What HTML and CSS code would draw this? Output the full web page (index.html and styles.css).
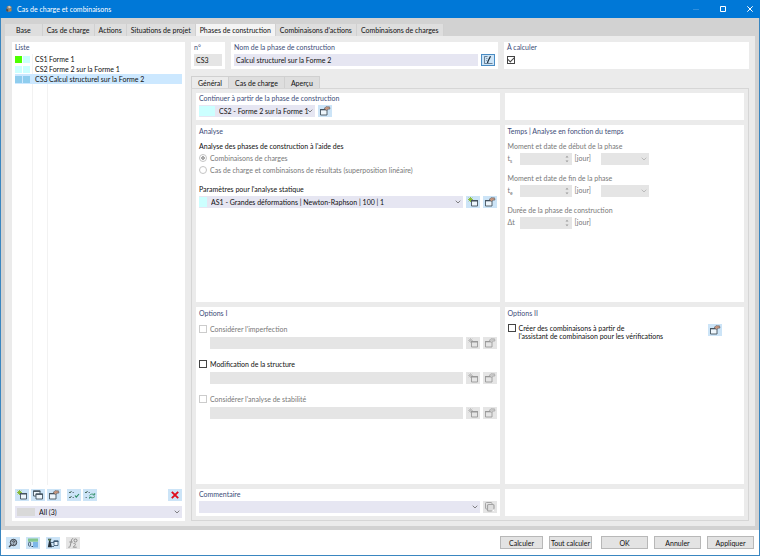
FILE: index.html
```
<!DOCTYPE html>
<html lang="fr">
<head>
  <meta charset="UTF-8" />
  <meta name="viewport" content="width=device-width, initial-scale=1.0" />
  <title>Cas de charge et combinaisons</title>
  <link rel="stylesheet" href="styles.css">
</head>
<body>

  <!-- Icon sprite -->
  <svg class="sprite" aria-hidden="true">
    <symbol id="i-chevron" viewBox="0 0 6 4"><path d="M.7.7 3 3 5.300.7" fill="none" stroke="currentColor" stroke-width=".8"/></symbol>
    <symbol id="i-spin" viewBox="0 0 4 8"><path d="M.5 2.500 2 .8 3.500 2.500zM.5 5.500 2 7.200 3.500 5.500z" fill="currentColor"/></symbol>
    <symbol id="i-new" viewBox="0 0 14 12">
      <path class="star" d="M4.500 1v5M2 3.500h5M2.700 1.700l3.600 3.600M6.300 1.700 2.700 5.300" fill="none" stroke-width=".9"/>
      <path class="box" d="M5.500 4.500h6v5.500H5.500z" stroke-width=".9"/>
      <path class="bar" d="M5.100 4h6.800v1.500H5.100z"/>
    </symbol>
    <symbol id="i-edit" viewBox="0 0 14 12">
      <path class="box" d="M2.500 4.500h6.500v5.500H2.500z" stroke-width=".9"/>
      <path class="bar" d="M2.100 4h6v1.300h-6z"/>
      <path class="hand" d="M6 3.500 8.500 1.500l1.200.3L11.500 1.800 12 4 10 4.300 8.500 5.500 7.600 4.800z" stroke-width=".5"/>
    </symbol>
    <symbol id="i-copy" viewBox="0 0 14 12">
      <path class="box" d="M2.500 2h6.500v5H2.500z" stroke-width=".9"/><path class="bar" d="M2.100 1.500h7.300v1.400H2.100z"/>
      <path class="box" d="M5 5h6.500v5H5z" stroke-width=".9"/><path class="bar" d="M4.600 4.500h7.300v1.400H4.600z"/>
    </symbol>
    <symbol id="i-checks" viewBox="0 0 14 12" fill="none">
      <path d="M2 3l1 1 1.500-2M2 8l1 1 1.500-2" stroke="#3b5948" stroke-width=".9"/>
      <path d="M5.500 3.500h1.500M5.500 8.500h1.500" stroke="#5a6a78" stroke-width=".8"/>
      <path d="M8 6.500 9.300 8.200 12 5" stroke="#2a8a60" stroke-width="1.100"/>
    </symbol>
    <symbol id="i-swap" viewBox="0 0 14 12" fill="none">
      <path d="M2 3l1 1 1.500-2" stroke="#3b5948" stroke-width=".9"/>
      <path d="M5.500 3.500h1.500M2.500 8.500h1.500" stroke="#5a6a78" stroke-width=".8"/>
      <path d="M6.500 6.500C7.500 4.700 10 4.700 11.500 5.700M11.700 4v2h-2M12 7.500c-1.500 1.700-4 1.500-5 .8M6.500 9.700V8h2" stroke="#2a8a60" stroke-width=".8"/>
    </symbol>
    <symbol id="i-delete" viewBox="0 0 14 12"><path d="M3.800 2.800 10.200 9.200M10.200 2.800 3.800 9.200" stroke="#e00c1c" stroke-width="1.900" fill="none"/></symbol>
    <symbol id="i-rename" viewBox="0 0 14 12" fill="none">
      <path d="M6.500 2.500h-3v7h8" stroke="#3d5870" stroke-width=".7"/>
      <path d="M5 4.500h1.500M5 6.500h1" stroke="#6b8296" stroke-width=".7"/>
      <path d="M9.500 2.200 7 7.300 6.500 9" stroke="#1d2d3d" stroke-width="1.200"/>
    </symbol>
    <symbol id="i-stack" viewBox="0 0 14 12">
      <rect x="2.500" y="1.500" width="6.500" height="6.500" rx="1" fill="none" stroke="#a4a4a4" stroke-width="1"/>
      <rect x="4.500" y="3.500" width="6.500" height="6.500" rx="1" fill="#dedede" stroke="#a4a4a4" stroke-width="1.200"/>
      <path d="M11.500 7.500v3h-3z" fill="#fff"/>
    </symbol>
    <symbol id="i-help" viewBox="0 0 14 12">
      <path d="M5.500 7.500 3 10" stroke="#3a3f46" stroke-width="1.300"/>
      <circle cx="7.500" cy="5.500" r="3.200" fill="#a6b6c5" stroke="#3a3f46" stroke-width="1"/>
      <path d="M6.500 4.800c0-1.400 2.200-1.200 2 0-.1.600-1 .6-1 1.400M7.500 6.900v.8" fill="none" stroke="#222" stroke-width=".8"/>
    </symbol>
    <symbol id="i-units" viewBox="0 0 14 12">
      <path d="M2 1.500h10v3.200H2z" fill="#83c78f"/><path d="M7 5h5v5.500H7z" fill="#7db7e8"/>
      <rect x="2.600" y="5.200" width="2" height="4" rx="1" fill="none" stroke="#28425a" stroke-width=".8"/>
      <path d="M5.500 9.500h1.500" stroke="#28425a" stroke-width="1"/>
    </symbol>
    <symbol id="i-tree" viewBox="0 0 14 12">
      <path d="M1.800 1.800h3.700L4.500 4l1.500 6.300H1.800L3 4z" fill="#26323c"/>
      <path d="M2.500 2.300h2v1.200h-2z" fill="#73a85f"/>
      <path d="M5 5.500h3M5 9.500h3" stroke="#34506a" stroke-width=".8"/>
      <path d="M8 4h4v4.500H8z" fill="#eaf5ff" stroke="#34506a" stroke-width=".8"/><path d="M7.600 3.600h4.800v1.300H7.600z" fill="#34506a"/>
    </symbol>
    <symbol id="i-fx" viewBox="0 0 14 12" fill="none" stroke="#8a8a8a">
      <path d="M7.300 1.800C6 1.200 5.600 2.500 5.300 4L4.200 9c-.3 1.400-1.200 1.500-1.900 1.200M3.300 5h3.500" stroke-width=".9"/>
      <path d="M7.500 6.500c1.500-.7 2.500.5 1.500 1.700L7.200 10.200h3.500" stroke-width=".9"/>
      <circle cx="9.500" cy="3.500" r="1.500" stroke-width="1"/>
    </symbol>
  </svg>

  <div class="window">
    <header class="titlebar">
      <svg class="app-icon" viewBox="0 0 10 10">
        <path d="M2.500 1.500 6 .5 8.500 2.500 8 6 5 9 1.500 7.500z" fill="#8d8174"/>
        <path d="M3.500 2 6 1.300 7.500 3 5 4.500z" fill="#d8cdb8"/>
        <path d="M1.500 4.500 4 5.500v3L1.500 7.500z" fill="#4f4a49"/>
        <path d="M5.500 5.500h2.500v2.500H5.500z" fill="#d9882f"/>
      </svg>
      <h1>Cas de charge et combinaisons</h1>
      <div class="caption-buttons">
        <button class="caption-btn dim" aria-label="Réduire"><svg viewBox="0 0 8 8"><path d="M1 4.500h6"/></svg></button>
        <button class="caption-btn" aria-label="Agrandir"><svg viewBox="0 0 8 8"><path d="M1.500 1.500h5v5h-5z"/></svg></button>
        <button class="caption-btn" aria-label="Fermer"><svg viewBox="0 0 8 8"><path d="M1.300 1.300l5.400 5.400M6.700 1.300 1.300 6.700"/></svg></button>
      </div>
    </header>

    <main class="workspace">
      <nav class="tabs main-tabs">
        <button class="tab">Base</button>
        <button class="tab">Cas de charge</button>
        <button class="tab">Actions</button>
        <button class="tab">Situations de projet</button>
        <button class="tab active">Phases de construction</button>
        <button class="tab">Combinaisons d'actions</button>
        <button class="tab">Combinaisons de charges</button>
      </nav>

      <div class="page">
        <!-- Left list -->
        <aside class="panel list-panel">
          <h2>Liste</h2>
          <ul class="phase-list">
            <li><span class="swatches"><i class="green"></i><i class="cyan"></i></span><span class="code">CS1</span><span>Forme 1</span></li>
            <li><span class="swatches"><i class="cyan"></i><i class="cyan"></i></span><span class="code">CS2</span><span>Forme 2 sur la Forme 1</span></li>
            <li class="selected"><span class="swatches"><i class="blue"></i><i class="blue"></i></span><span class="code">CS3</span><span>Calcul structurel sur la Forme 2</span></li>
            <li class="rest"><span class="swatches"></span><span class="code"></span><span></span></li>
          </ul>
          <div class="list-tools">
            <button class="icon-btn" aria-label="Nouveau"><svg><use href="#i-new"/></svg></button>
            <button class="icon-btn" aria-label="Copier"><svg><use href="#i-copy"/></svg></button>
            <button class="icon-btn" aria-label="Modifier"><svg><use href="#i-edit"/></svg></button>
            <button class="icon-btn group" aria-label="Tout sélectionner"><svg><use href="#i-checks"/></svg></button>
            <button class="icon-btn" aria-label="Inverser la sélection"><svg><use href="#i-swap"/></svg></button>
            <button class="icon-btn last" aria-label="Supprimer"><svg><use href="#i-delete"/></svg></button>
          </div>
          <div class="combo filter">
            <span class="chip grey"></span>
            <select aria-label="Filtre"><option>All (3)</option></select>
            <svg class="chevron"><use href="#i-chevron"/></svg>
          </div>
        </aside>

        <section class="detail">
          <div class="head">
            <div class="panel number-panel">
              <h2><label for="num">n°</label></h2>
              <input class="field readonly" id="num" type="text" value="CS3" readonly>
            </div>
            <div class="panel name-panel">
              <h2><label for="name">Nom de la phase de construction</label></h2>
              <div class="row">
                <input class="field" id="name" type="text" value="Calcul structurel sur la Forme 2">
                <button class="icon-btn framed" aria-label="Renommer"><svg><use href="#i-rename"/></svg></button>
              </div>
            </div>
            <div class="panel calc-panel">
              <h2><label for="calc">À calculer</label></h2>
              <input class="check" id="calc" type="checkbox" checked>
            </div>
          </div>

          <nav class="tabs sub-tabs">
            <button class="tab active">Général</button>
            <button class="tab">Cas de charge</button>
            <button class="tab">Aperçu</button>
          </nav>

          <div class="tab-page">
            <section class="panel">
              <h2><label for="from">Continuer à partir de la phase de construction</label></h2>
              <div class="row">
                <div class="combo from">
                  <span class="chip wide"></span>
                  <select id="from"><option>CS2 - Forme 2 sur la Forme 1</option></select>
                  <svg class="chevron"><use href="#i-chevron"/></svg>
                </div>
                <button class="icon-btn" aria-label="Modifier la phase"><svg><use href="#i-edit"/></svg></button>
              </div>
            </section>
            <section class="panel"></section>

            <section class="panel tall">
              <h2>Analyse</h2>
              <div class="block">
                <p>Analyse des phases de construction à l'aide des</p>
                <label class="option disabled"><input class="radio" type="radio" name="mode" checked disabled>Combinaisons de charges</label>
                <label class="option disabled"><input class="radio" type="radio" name="mode" disabled>Cas de charge et combinaisons de résultats (superposition linéaire)</label>
              </div>
              <div class="block">
                <p><label for="static">Paramètres pour l'analyse statique</label></p>
                <div class="row">
                  <div class="combo">
                    <span class="chip"></span>
                    <select id="static"><option>AS1 - Grandes déformations | Newton-Raphson | 100 | 1</option></select>
                    <svg class="chevron"><use href="#i-chevron"/></svg>
                  </div>
                  <button class="icon-btn" aria-label="Nouveau"><svg><use href="#i-new"/></svg></button>
                  <button class="icon-btn" aria-label="Modifier"><svg><use href="#i-edit"/></svg></button>
                </div>
              </div>
            </section>

            <section class="panel tall">
              <h2>Temps | Analyse en fonction du temps</h2>
              <div class="block disabled">
                <p>Moment et date de début de la phase</p>
                <div class="row">
                  <label class="sym" for="ts">t<sub>s</sub></label>
                  <div class="spin"><input class="field" id="ts" type="text" disabled><svg><use href="#i-spin"/></svg></div>
                  <span class="unit">[jour]</span>
                  <div class="combo off"><select aria-label="Date de début" disabled></select><svg class="chevron"><use href="#i-chevron"/></svg></div>
                </div>
              </div>
              <div class="block disabled">
                <p>Moment et date de fin de la phase</p>
                <div class="row">
                  <label class="sym" for="te">t<sub>e</sub></label>
                  <div class="spin"><input class="field" id="te" type="text" disabled><svg><use href="#i-spin"/></svg></div>
                  <span class="unit">[jour]</span>
                  <div class="combo off"><select aria-label="Date de fin" disabled></select><svg class="chevron"><use href="#i-chevron"/></svg></div>
                </div>
              </div>
              <div class="block disabled">
                <p>Durée de la phase de construction</p>
                <div class="row">
                  <label class="sym" for="dt">Δt</label>
                  <div class="spin"><input class="field" id="dt" type="text" disabled><svg><use href="#i-spin"/></svg></div>
                  <span class="unit">[jour]</span>
                </div>
              </div>
            </section>

            <section class="panel tall">
              <h2>Options I</h2>
              <div class="choice">
                <label class="option disabled"><input class="check" type="checkbox" disabled>Considérer l'imperfection</label>
                <div class="row">
                  <input class="field" type="text" aria-label="Imperfection" disabled>
                  <button class="icon-btn" aria-label="Nouveau" disabled><svg><use href="#i-new"/></svg></button>
                  <button class="icon-btn" aria-label="Modifier" disabled><svg><use href="#i-edit"/></svg></button>
                </div>
              </div>
              <div class="choice">
                <label class="option"><input class="check" type="checkbox">Modification de la structure</label>
                <div class="row">
                  <input class="field" type="text" aria-label="Structure" disabled>
                  <button class="icon-btn" aria-label="Nouveau" disabled><svg><use href="#i-new"/></svg></button>
                  <button class="icon-btn" aria-label="Modifier" disabled><svg><use href="#i-edit"/></svg></button>
                </div>
              </div>
              <div class="choice">
                <label class="option disabled"><input class="check" type="checkbox" disabled>Considérer l'analyse de stabilité</label>
                <div class="row">
                  <input class="field" type="text" aria-label="Stabilité" disabled>
                  <button class="icon-btn" aria-label="Nouveau" disabled><svg><use href="#i-new"/></svg></button>
                  <button class="icon-btn" aria-label="Modifier" disabled><svg><use href="#i-edit"/></svg></button>
                </div>
              </div>
            </section>

            <section class="panel tall">
              <h2>Options II</h2>
              <div class="choice wizard">
                <label class="option two-lines"><input class="check" type="checkbox"><span>Créer des combinaisons à partir de<br>l'assistant de combinaison pour les vérifications</span></label>
                <button class="icon-btn" aria-label="Modifier l'assistant"><svg><use href="#i-edit"/></svg></button>
              </div>
            </section>

            <section class="panel">
              <h2><label for="comment">Commentaire</label></h2>
              <div class="row">
                <div class="combo">
                  <select id="comment"><option></option></select>
                  <svg class="chevron"><use href="#i-chevron"/></svg>
                </div>
                <button class="icon-btn" aria-label="Bibliothèque" disabled><svg><use href="#i-stack"/></svg></button>
              </div>
            </section>
            <section class="panel"></section>
          </div>
        </section>
      </div>
    </main>

    <footer class="footer">
      <div class="footer-tools">
        <button class="icon-btn" aria-label="Aide"><svg><use href="#i-help"/></svg></button>
        <button class="icon-btn" aria-label="Unités"><svg><use href="#i-units"/></svg></button>
        <button class="icon-btn" aria-label="Navigateur"><svg><use href="#i-tree"/></svg></button>
        <button class="icon-btn" aria-label="Formule" disabled><svg><use href="#i-fx"/></svg></button>
      </div>
      <div class="actions">
        <button class="btn">Calculer</button>
        <button class="btn">Tout calculer</button>
      </div>
      <div class="actions wide">
        <button class="btn">OK</button>
        <button class="btn">Annuler</button>
        <button class="btn">Appliquer</button>
      </div>
    </footer>
  </div>

</body>
</html>
```

FILE: styles.css
```
* {
  box-sizing: border-box;
}
body {
  margin: 0;
  font-family: Lato, "Open Sans", sans-serif;
  font-size: 7px;
  line-height: 10px;
  color: #101010;
}
button, input, select {
  font: inherit;
  color: inherit;
  margin: 0;
  padding: 0;
  border: none;
  border-radius: 0;
}
h1, h2, p, ul {
  margin: 0;
  padding: 0;
  font-size: inherit;
  font-weight: 400;
}
.sprite {
  position: absolute;
  width: 0;
  height: 0;
}
.window {
  display: flex;
  flex-direction: column;
  min-height: 100vh;
  border: 1px solid #3a86c0;
  border-top: none;
}

/* Title bar */
.titlebar {
  display: flex;
  align-items: center;
  height: 18px;
  margin: 0 -1px;
  padding: 0 6px 0 5px;
  background: #0078d7;
  color: #fff;
}
.app-icon {
  width: 8px;
  height: 8px;
  margin-right: 4px;
}
.caption-buttons {
  display: flex;
  margin-left: auto;
}
.caption-btn {
  width: 27px;
  height: 18px;
  background: none;
}
.caption-btn svg {
  display: block;
  width: 8px;
  height: 8px;
  margin-left: auto;
  fill: none;
  stroke: #fff;
}
.caption-btn.dim svg {
  stroke: #2f8fde;
}

/* Main area */
.workspace {
  flex: 1;
  display: flex;
  flex-direction: column;
  padding: 6px 4px 4px;
  background: #d2d2d2;
}
.tabs {
  display: flex;
}
.tab {
  height: 12px;
  background: #dedede;
  border-right: 1px solid #d0d0d0;
  white-space: nowrap;
}
.tab.active {
  background: #f4f4f4;
}
.main-tabs .tab {
  padding: 0 4px;
}
.main-tabs .tab:first-child {
  padding: 0 11px;
}
.page {
  flex: 1;
  display: flex;
  gap: 6px;
  padding: 6px 6px 5px 7px;
  background: #ebebeb;
}
.panel {
  padding: 0 3px 3px;
  background: #fff;
}
.panel.tall {
  padding-top: 1px;
}
.panel h2 {
  height: 12px;
  line-height: 11px;
  color: #3c4c78;
}

/* Phase list */
.list-panel {
  display: flex;
  flex-direction: column;
  flex: 0 0 173px;
}
.phase-list {
  flex: 1;
  display: flex;
  flex-direction: column;
  list-style: none;
}
.phase-list li {
  display: flex;
  height: 10px;
}
.phase-list li.rest {
  flex: 1;
}
.phase-list .selected {
  background: #cce8ff;
}
.swatches {
  display: flex;
  align-items: center;
  gap: 1px;
  width: 18px;
  border-right: 1px solid #f2f2f2;
}
.swatches i {
  width: 7px;
  height: 7px;
}
.green {
  background: #4cff00;
}
.cyan {
  background: #ccffff;
}
.blue {
  background: #8fcdee;
}
.code {
  width: 15px;
  padding-left: 2px;
  margin-right: 1px;
  border-right: 1px solid #f2f2f2;
}
.phase-list .selected span {
  border-color: transparent;
}
.list-tools {
  display: flex;
  gap: 2px;
  margin: 4px 0 5px;
}
.list-tools .group {
  margin-left: 4px;
}
.list-tools .last {
  margin-left: auto;
}

/* Controls */
.row {
  display: flex;
  gap: 3px;
}
.field {
  height: 12px;
  padding: 0 2px;
  min-width: 0;
  background: #e6e6f2;
}
.row .field {
  flex: 1;
}
.field:disabled, .field.readonly {
  background: #e5e5e5;
}
.combo {
  position: relative;
  display: flex;
  align-items: center;
  flex: 1;
  height: 12px;
  background: #e6e6f2;
}
.combo select {
  flex: 1;
  height: 12px;
  min-width: 0;
  padding-left: 4px;
  background: transparent;
  appearance: none;
}
.chevron {
  position: absolute;
  right: 2px;
  top: 4px;
  width: 6px;
  height: 4px;
  color: #666;
  pointer-events: none;
}
.combo.off {
  flex: 0 0 48px;
  background: #e5e5e5;
}
.combo.off .chevron {
  color: #b0b0b0;
}
.combo.filter {
  flex: none;
}
.combo.from {
  flex: 0 0 116px;
}
.chip {
  width: 8px;
  height: 10px;
  background: #ccffff;
}
.chip.wide {
  width: 16px;
}
.chip.grey {
  width: 18px;
  height: 8px;
  margin-left: 2px;
  background: #d9d9d9;
}
.icon-btn {
  flex: none;
  width: 14px;
  height: 12px;
  background: #cce4f7;
}
.icon-btn svg {
  display: block;
  width: 14px;
  height: 12px;
  --line: #44535f;
}
.star {
  stroke: var(--star, #86b82a);
}
.box {
  fill: var(--fill, #eef6fc);
  stroke: var(--line);
}
.bar {
  fill: var(--line);
}
.hand {
  fill: var(--hand, #c4947c);
  stroke: var(--line);
}
.icon-btn:disabled {
  background: #e5e5e5;
}
.icon-btn:disabled svg {
  --line: #989898;
  --star: #bdbdbd;
  --fill: #e5e5e5;
  --hand: #c8c8c8;
}
.icon-btn.framed {
  outline: 1px solid #4a8cc4;
  outline-offset: -1px;
}
.check {
  appearance: none;
  display: block;
  flex: none;
  width: 8px;
  height: 8px;
  border: 1px solid #444;
  background: #fff;
}
.check:checked::after {
  content: "";
  display: block;
  width: 5px;
  height: 3px;
  border: solid #444;
  border-width: 0 0 1px 1px;
  transform: rotate(-45deg);
}
.check:disabled {
  border-color: #ccc;
}
.radio {
  appearance: none;
  flex: none;
  width: 8px;
  height: 8px;
  border: 1px solid #c4c4c4;
  border-radius: 50%;
}
.radio:checked {
  background: radial-gradient(circle, #aaa 2px, #fff 2px);
}
.option {
  display: flex;
  align-items: center;
  gap: 3px;
}
.disabled {
  color: #787878;
}

/* Phase details */
.detail {
  flex: 1;
  display: flex;
  flex-direction: column;
  min-width: 0;
}
.head {
  display: grid;
  grid-template-columns: 34px 267fr 245fr;
  column-gap: 6px;
  margin-bottom: 7px;
}
.number-panel .field {
  display: block;
  width: 100%;
}
.calc-panel .check {
  margin-top: 2px;
}
.sub-tabs .tab {
  padding: 0 6px;
  border-top: 1px solid #d0d0d0;
}
.sub-tabs .tab:first-child {
  border-left: 1px solid #d0d0d0;
}
.sub-tabs .tab.active {
  background: #ebebeb;
}
.tab-page {
  flex: 1;
  display: grid;
  grid-template-columns: 303fr 239fr;
  grid-template-rows: 27px 1fr 1fr 27px;
  gap: 5px;
  padding: 4px;
  border: 1px solid #d6d6d6;
}
.block {
  margin-bottom: 8px;
}
.block:nth-child(2) {
  margin-top: 3px;
}
.block p {
  margin-bottom: 1px;
}
.block .option {
  height: 12px;
}
.block .row {
  margin-top: 2px;
}
.sym {
  width: 9px;
}
.sym sub {
  font-size: 5px;
  line-height: 5px;
}
.spin {
  position: relative;
  display: flex;
  width: 52px;
}
.spin svg {
  position: absolute;
  right: 3px;
  top: 2px;
  width: 4px;
  height: 8px;
  color: #999;
}
.unit {
  width: 23px;
}
.choice {
  margin: 4px 0 10px;
}
.choice .row {
  margin: 3px 0 0 11px;
}
.wizard {
  display: flex;
  justify-content: space-between;
  padding-right: 19px;
}
.two-lines {
  align-items: flex-start;
  line-height: 8px;
}

/* Footer */
.footer {
  display: flex;
  align-items: center;
  gap: 9px;
  height: 25px;
  padding: 0 5px;
  background: #fff;
}
.footer-tools {
  display: flex;
  gap: 6px;
  margin-right: auto;
}
.actions {
  display: flex;
  gap: 6px;
}
.btn {
  width: 43px;
  height: 13px;
  background: #e3e3e3;
  border: 1px solid #b8b8b8;
  white-space: nowrap;
}
.actions.wide .btn {
  width: 47px;
}
```
